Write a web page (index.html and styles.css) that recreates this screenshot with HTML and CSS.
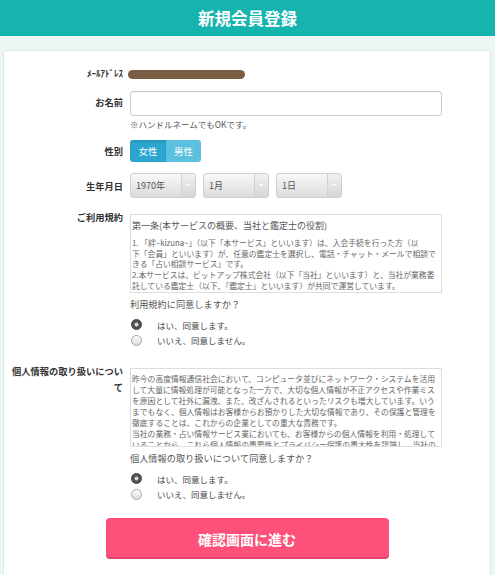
FILE: index.html
```html
<!DOCTYPE html>
<html lang="ja">
<head>
    <meta charset="UTF-8">
    <meta name="viewport" content="width=device-width, initial-scale=1.0">
    <title>新規会員登録</title>
    <link rel="stylesheet" href="styles.css">
</head>
<body>
    <header class="page-header">
        <h1>新規会員登録</h1>
    </header>

    <div class="page-bg">
        <form class="register-card" onsubmit="return false;">
            <div class="form-row">
                <div class="row-label label-kana">ﾒｰﾙｱﾄﾞﾚｽ</div>
                <div class="row-field"><span class="masked"></span></div>
            </div>

            <div class="form-row row-name">
                <div class="row-label">お名前</div>
                <div class="row-field">
                    <input type="text" class="text-input">
                    <p class="field-note">※ハンドルネームでもOKです。</p>
                </div>
            </div>

            <div class="form-row row-gender">
                <div class="row-label">性別</div>
                <div class="row-field">
                    <div class="gender-group">
                        <button type="button" class="gender-btn is-active">女性</button>
                        <button type="button" class="gender-btn">男性</button>
                    </div>
                </div>
            </div>

            <div class="form-row row-birth">
                <div class="row-label">生年月日</div>
                <div class="row-field birth-selects">
                    <div class="select-box"><select><option>1970年</option></select></div>
                    <div class="select-box"><select><option>1月</option></select></div>
                    <div class="select-box"><select><option>1日</option></select></div>
                </div>
            </div>

            <div class="form-row row-top row-terms">
                <div class="row-label">ご利用規約</div>
                <div class="row-field">
                    <div class="scroll-box">
                        <p class="terms-title">第一条(本サービスの概要、当社と鑑定士の役割)</p>
                        <p class="scroll-text">1. 「絆~kizuna~」（以下「本サービス」といいます）は、入会手続を行った方（以<br>下「会員」といいます）が、任意の鑑定士を選択し、電話・チャット・メールで相談で<br>きる「占い相談サービス」です。<br>2.本サービスは、ビットアップ株式会社（以下「当社」といいます）と、当社が業務委<br>託している鑑定士（以下、「鑑定士」といいます）が共同で運営しています。</p>
                    </div>
                    <p class="agree-question">利用規約に同意しますか？</p>
                    <div class="agree-list">
                        <label class="radio-line"><input type="radio" name="terms" checked>はい、同意します。</label>
                        <label class="radio-line"><input type="radio" name="terms">いいえ、同意しません。</label>
                    </div>
                </div>
            </div>

            <div class="form-row row-top row-privacy">
                <div class="row-label">個人情報の取り扱いについて</div>
                <div class="row-field">
                    <div class="scroll-box privacy-box">
                        <p class="scroll-text">昨今の高度情報通信社会において、コンピュータ並びにネットワーク・システムを活用<br>して大量に情報処理が可能となった一方で、大切な個人情報が不正アクセスや作業ミス<br>を原因として社外に漏洩、また、改ざんされるといったリスクも増大しています。いう<br>までもなく、個人情報はお客様からお預かりした大切な情報であり、その保護と管理を<br>徹底することは、これからの企業としての重大な責務です。<br>当社の業務・占い情報サービス業においても、お客様からの個人情報を利用・処理して<br>いることから、これら個人情報の重要性とプライバシー保護の重大性を認識し、当社の</p>
                    </div>
                    <p class="agree-question">個人情報の取り扱いについて同意しますか？</p>
                    <div class="agree-list">
                        <label class="radio-line"><input type="radio" name="privacy" checked>はい、同意します。</label>
                        <label class="radio-line"><input type="radio" name="privacy">いいえ、同意しません。</label>
                    </div>
                </div>
            </div>

            <button type="submit" class="submit-btn">確認画面に進む</button>
        </form>
    </div>
</body>
</html>
```

FILE: styles.css
```css
body {
    margin: 0;
    font-family: "Noto Sans CJK JP", "Noto Sans", sans-serif;
    background-color: #eef6f4;
    color: #333;
}

.page-header {
    height: 36px;
    background-color: #16b4af;
    display: flex;
    align-items: center;
    justify-content: center;
}

.page-header h1 {
    margin: 0;
    font-size: 16.5px;
    font-weight: bold;
    color: #fff;
}

.page-bg {
    padding: 14px 4px 0 3px;
}

.register-card {
    background-color: #fff;
    border: 1px solid #d6ece8;
    border-radius: 3px;
    padding: 16px 0 30px;
}

.form-row {
    display: grid;
    grid-template-columns: 119px 312px;
    column-gap: 7px;
    align-items: center;
}

.row-label {
    text-align: right;
    font-size: 9.25px;
    font-weight: bold;
    line-height: 14px;
    color: #333;
}

.label-kana {
    font-size: 9px;
}

.row-field {
    min-width: 0;
}

.masked {
    display: block;
    width: 117px;
    height: 9px;
    margin-left: -2px;
    border-radius: 5px;
    background-color: #7a5d43;
}

/* name */
.row-name {
    margin-top: 10px;
    align-items: start;
}

.row-name .row-label {
    line-height: 22px;
}

.text-input {
    display: block;
    width: 100%;
    height: 25px;
    box-sizing: border-box;
    border: 1px solid #ccc;
    border-radius: 3px;
    box-shadow: inset 0 1px 1px rgba(0, 0, 0, 0.06);
}

.field-note {
    margin: 3px 0 0;
    font-size: 8.5px;
    line-height: 10px;
    color: #555;
}

/* gender */
.row-gender {
    margin-top: 11px;
}

.gender-group {
    display: flex;
    width: fit-content;
    border-radius: 3px;
    overflow: hidden;
}

.gender-btn {
    width: 35px;
    height: 22px;
    padding: 0;
    border: none;
    background-color: #5bc0de;
    color: #fff;
    font-family: inherit;
    font-size: 9.5px;
}

.gender-btn.is-active {
    width: 36px;
    background-color: #2aa6cf;
    box-shadow: inset 0 2px 3px rgba(0, 0, 0, 0.1);
}

/* birth date */
.row-birth {
    margin-top: 11px;
}

.birth-selects {
    display: flex;
    gap: 7px;
}

.select-box {
    position: relative;
    width: 66px;
    height: 25px;
}

.select-box select {
    appearance: none;
    -webkit-appearance: none;
    display: block;
    width: 100%;
    height: 100%;
    padding: 0 0 0 5px;
    border: 1px solid #cfcfcf;
    border-radius: 3px;
    background: linear-gradient(#f8f8f8, #dcdcdc);
    font-family: inherit;
    font-size: 9px;
    color: #555;
}

.select-box::before {
    content: "";
    position: absolute;
    top: 1px;
    right: 1px;
    bottom: 1px;
    width: 13px;
    border-left: 1px solid #d2d2d2;
    border-radius: 0 2px 2px 0;
    background: linear-gradient(#f0f0f0, #d6d6d6);
    pointer-events: none;
}

.select-box::after {
    content: "";
    position: absolute;
    top: 11px;
    right: 6px;
    border-left: 2px solid transparent;
    border-right: 2px solid transparent;
    border-top: 2px solid #fff;
    pointer-events: none;
}

/* terms / privacy */
.row-top {
    align-items: start;
}

.row-top .row-label {
    line-height: 16px;
    margin-top: -5px;
}

.row-terms {
    margin-top: 16px;
}

.row-privacy {
    margin-top: 20px;
}

.scroll-box {
    height: 79px;
    box-sizing: border-box;
    padding: 4px 2px 0 1px;
    border: 1px solid #ddd;
    overflow: hidden;
}

.terms-title {
    margin: 0 0 6px;
    font-size: 9px;
    line-height: 13px;
    color: #555;
    white-space: nowrap;
}

.scroll-text {
    margin: 0;
    font-size: 7.8px;
    line-height: 10.7px;
    color: #666;
    white-space: nowrap;
}

.privacy-box .scroll-text {
    line-height: 11px;
}

.agree-question {
    margin: 5px 0 0;
    font-size: 9.2px;
    line-height: 12px;
    color: #555;
}

.agree-list {
    margin-top: 7px;
}

.radio-line {
    display: flex;
    align-items: center;
    height: 15.5px;
    font-size: 8.5px;
    color: #444;
}

.radio-line input {
    appearance: none;
    -webkit-appearance: none;
    width: 11px;
    height: 11px;
    margin: 0 15px 0 1px;
    border: 1px solid #a8a8a8;
    border-radius: 50%;
    background: linear-gradient(#fdfdfd, #dcdcdc);
}

.radio-line input:checked {
    border-color: #3a3a3a;
    background: radial-gradient(circle, #d8d8d8 0 1.6px, #4a4a4a 2.4px, #666 100%);
}

/* submit */
.submit-btn {
    display: block;
    width: 283px;
    height: 41px;
    margin: 16px auto 0;
    border: none;
    border-radius: 4px;
    background-color: #ff5079;
    box-shadow: inset 0 -2px 0 rgba(0, 0, 0, 0.12);
    color: #fff;
    font-family: inherit;
    font-size: 14px;
    font-weight: bold;
    cursor: pointer;
}
```
